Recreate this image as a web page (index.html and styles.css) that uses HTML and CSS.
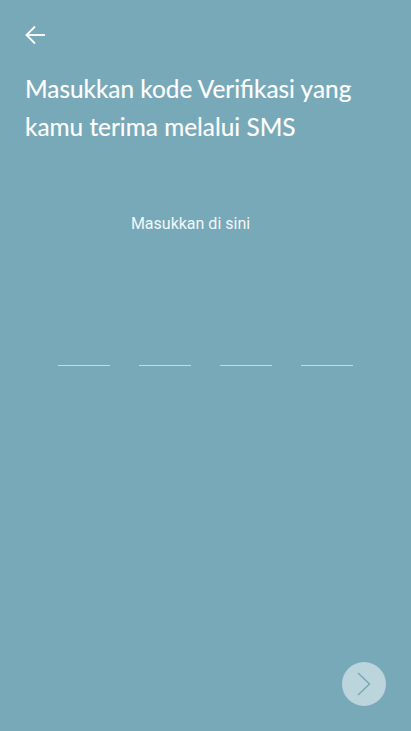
FILE: index.html
```html
<!DOCTYPE html>
<html lang="id">
<head>
    <meta charset="UTF-8">
    <meta name="viewport" content="width=device-width, initial-scale=1.0">
    <title>Verifikasi SMS</title>
    <link rel="stylesheet" href="styles.css">
</head>
<body>

    <div class="page">
        <button class="back" aria-label="Kembali">
            <svg width="20" height="20" viewBox="0 0 20 20" fill="none" stroke="#fff" stroke-width="1.8">
                <path d="M20 10H1.500"/>
                <path d="M10 1.500L1.500 10l8.500 8.500"/>
            </svg>
        </button>

        <h1 class="title">Masukkan kode Verifikasi yang kamu terima melalui SMS</h1>

        <p class="hint">Masukkan di sini</p>

        <div class="code">
            <span class="digit"></span>
            <span class="digit"></span>
            <span class="digit"></span>
            <span class="digit"></span>
        </div>

        <button class="next" aria-label="Lanjut">
            <svg width="14" height="24" viewBox="0 0 14 24" fill="none" stroke="#77a9b8" stroke-width="1.500">
                <path d="M1 1l11.500 11L1 23"/>
            </svg>
        </button>
    </div>

</body>
</html>
```

FILE: styles.css
```css
* {
    margin: 0;
    padding: 0;
    box-sizing: border-box;
}

body {
    background-color: #77a9b8;
    color: #fff;
    font-family: Lato, sans-serif;
}

.page {
    display: flex;
    flex-direction: column;
    height: 731px;
    padding: 25px;
    overflow: hidden;
}

button {
    border: none;
    background: none;
}

.back {
    display: flex;
    width: 20px;
    height: 20px;
}

.title {
    margin-top: 25px;
    font-size: 24.400px;
    font-weight: 400;
    line-height: 38px;
    -webkit-text-stroke: 0.150px #fff;
}

.hint {
    margin-top: 68px;
    padding-right: 30px;
    color: #f2f7f8;
    font-family: Roboto, sans-serif;
    font-size: 16px;
    line-height: 19px;
    text-align: center;
}

.code {
    display: flex;
    gap: 29px;
    margin-top: 132px;
    margin-left: 33px;
}

.digit {
    width: 52px;
    height: 1px;
    background: #c3dae1;
}

.next {
    display: flex;
    align-items: center;
    justify-content: center;
    align-self: flex-end;
    width: 44px;
    height: 44px;
    margin-top: auto;
    border-radius: 50%;
    background: #bcd5dc;
}
```
